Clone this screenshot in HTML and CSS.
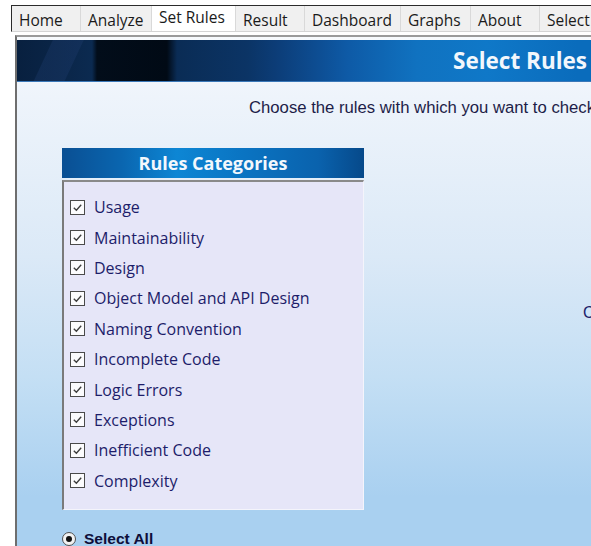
FILE: index.html
```html
<!DOCTYPE html>
<html lang="en">
<head>
<meta charset="utf-8">
<title>Set Rules</title>
<link rel="stylesheet" href="styles.css">
</head>
<body>
<div class="app">
  <nav class="tabs">
    <div class="tab">Home</div>
    <div class="tab">Analyze</div>
    <div class="tab active">Set Rules</div>
    <div class="tab">Result</div>
    <div class="tab">Dashboard</div>
    <div class="tab">Graphs</div>
    <div class="tab">About</div>
    <div class="tab">Select</div>
  </nav>
  <section class="panel">
    <header class="banner">
      <h1 class="banner-title">Select Rules</h1>
    </header>
    <div class="content">
      <p class="intro">Choose the rules with which you want to check</p>
      <div class="columns">
        <div class="categories">
          <div class="cat-head">Rules Categories</div>
          <ul class="cat-list">
            <li><span class="cb"><svg viewBox="0 0 14 14"><path d="M3 7.2 L5.8 10 L11 4" /></svg></span>Usage</li>
            <li><span class="cb"><svg viewBox="0 0 14 14"><path d="M3 7.2 L5.8 10 L11 4" /></svg></span>Maintainability</li>
            <li><span class="cb"><svg viewBox="0 0 14 14"><path d="M3 7.2 L5.8 10 L11 4" /></svg></span>Design</li>
            <li><span class="cb"><svg viewBox="0 0 14 14"><path d="M3 7.2 L5.8 10 L11 4" /></svg></span>Object Model and API Design</li>
            <li><span class="cb"><svg viewBox="0 0 14 14"><path d="M3 7.2 L5.8 10 L11 4" /></svg></span>Naming Convention</li>
            <li><span class="cb"><svg viewBox="0 0 14 14"><path d="M3 7.2 L5.8 10 L11 4" /></svg></span>Incomplete Code</li>
            <li><span class="cb"><svg viewBox="0 0 14 14"><path d="M3 7.2 L5.8 10 L11 4" /></svg></span>Logic Errors</li>
            <li><span class="cb"><svg viewBox="0 0 14 14"><path d="M3 7.2 L5.8 10 L11 4" /></svg></span>Exceptions</li>
            <li><span class="cb"><svg viewBox="0 0 14 14"><path d="M3 7.2 L5.8 10 L11 4" /></svg></span>Inefficient Code</li>
            <li><span class="cb"><svg viewBox="0 0 14 14"><path d="M3 7.2 L5.8 10 L11 4" /></svg></span>Complexity</li>
          </ul>
          <label class="radio-row"><span class="radio on"></span>Select All</label>
        </div>
        <div class="side">
          <span class="side-option">C</span>
        </div>
      </div>
    </div>
  </section>
</div>
</body>
</html>
```

FILE: styles.css
```css
html, body {
  margin: 0;
  padding: 0;
  background: #ffffff;
  overflow: hidden;
}

body {
  width: 591px;
  height: 546px;
  font-family: "Open Sans", "Noto Sans", sans-serif;
}

.app {
  padding-top: 5px;
}

/* tab strip */
.tabs {
  display: flex;
  margin-left: 11px;
  height: 27px;
  border-top: 1px solid #2b2b2b;
  border-left: 1px solid #2b2b2b;
  border-bottom: 1px solid #d4d4d4;
  box-sizing: border-box;
  white-space: nowrap;
  overflow: hidden;
}

.tab {
  box-sizing: border-box;
  height: 26px;
  padding: 0 7px;
  background: #f0f0f0;
  border-right: 1px solid #d9d9d9;
  border-bottom: 1px solid #dadada;
  font-size: 15.5px;
  line-height: 28px;
  color: #1a1a1a;
  flex: none;
}

.tab:nth-child(1) { width: 69px; }
.tab:nth-child(2) { width: 71px; }
.tab:nth-child(3) { width: 84px; }
.tab:nth-child(4) { width: 69px; }
.tab:nth-child(5) { width: 96px; }
.tab:nth-child(6) { width: 70px; }
.tab:nth-child(7) { width: 69px; }
.tab:nth-child(8) { width: 60px; }

.tab.active {
  background: #ffffff;
  border-bottom-color: #ffffff;
  line-height: 22px;
  padding-left: 7px;
}

/* main panel */
.panel {
  margin-left: 15px;
  margin-top: 3px;
  border-left: 2px solid #6e6e6e;
  border-top: 2px solid #9a9a9a;
  height: 520px;
  width: 576px;
  box-sizing: border-box;
  overflow: hidden;
  background: linear-gradient(180deg, #f7fafd 0px, #eef4fb 60px, #dbe9f7 220px, #c4dff4 340px, #a9d0f0 460px);
}

.banner {
  margin-top: 3px;
  height: 42px;
  border-bottom: 1px solid #3a78b8;
  box-sizing: border-box;
  background:
    linear-gradient(115deg, transparent 0 32px, rgba(30, 60, 110, 0.35) 33px 60px, transparent 61px),
    linear-gradient(90deg,
      #08203f 0px,
      #0a2547 40px,
      #0b2a50 75px,
      #020d1a 80px,
      #010a15 150px,
      #0a2c55 160px,
      #0b3465 230px,
      #0c3d78 260px,
      #0d4d92 300px,
      #0e5aa6 330px,
      #1072c0 400px,
      #0f78c8 470px,
      #0a6cbc 560px);
  display: flex;
  align-items: center;
}

.banner-title {
  margin: 0 0 0 436px;
  font-family: "Open Sans", "Noto Sans", sans-serif;
  font-size: 22.5px;
  font-weight: 700;
  color: #f2f7fc;
  white-space: nowrap;
}

.intro {
  margin: 0;
  padding: 16px 0 0 232px;
  font-family: "Liberation Sans", Arial, sans-serif;
  font-size: 16.7px;
  color: #1d1d48;
  white-space: nowrap;
  line-height: 20px;
}

.columns {
  display: flex;
  padding-top: 30px;
}

.categories {
  margin-left: 45px;
  width: 302px;
  flex: none;
}

.cat-head {
  height: 30px;
  background: linear-gradient(90deg, #0a4f93 0%, #0a66b0 20%, #0d86d4 38%, #0a74c2 60%, #0a62ad 85%, #06498a 100%);
  color: #f3f8fd;
  font-weight: 700;
  font-size: 18px;
  line-height: 31px;
  text-align: center;
}

.cat-list {
  list-style: none;
  margin: 2px 0 0 0;
  padding: 10px 0 17px 6px;
  height: 330px;
  box-sizing: border-box;
  background: #e6e6f8;
  border-top: 2px solid #8a8a8a;
  border-left: 2px solid #7a7a7a;
  border-right: 1px solid #f4f4fb;
  border-bottom: 1px solid #f4f4fb;
}

.cat-list li {
  display: flex;
  align-items: center;
  height: 30.4px;
  font-size: 16px;
  color: #1d1d6a;
  white-space: nowrap;
}

.cb {
  box-sizing: border-box;
  width: 15px;
  height: 15px;
  border: 1px solid #4a4a4a;
  background: #fbfbfd;
  margin-right: 9px;
  display: flex;
  flex: none;
}

.cb svg {
  width: 13px;
  height: 13px;
  fill: none;
  stroke: #3c3c3c;
  stroke-width: 1.4;
}

.radio-row {
  display: flex;
  align-items: center;
  margin-top: 20px;
  font-family: "Liberation Sans", Arial, sans-serif;
  font-weight: 700;
  font-size: 15.5px;
  color: #0e0e3a;
  white-space: nowrap;
}

.radio {
  box-sizing: border-box;
  width: 14px;
  height: 14px;
  border-radius: 50%;
  border: 1px solid #505050;
  background: #f2f2f2;
  margin-right: 8px;
  position: relative;
}

.radio.on::after {
  content: "";
  position: absolute;
  left: 3px;
  top: 3px;
  width: 6px;
  height: 6px;
  border-radius: 50%;
  background: #111;
}

.side {
  margin-left: 219px;
  padding-top: 153px;
}

.side-option {
  font-family: "Liberation Sans", Arial, sans-serif;
  font-size: 16px;
  color: #1d1d6a;
  white-space: nowrap;
}
```
